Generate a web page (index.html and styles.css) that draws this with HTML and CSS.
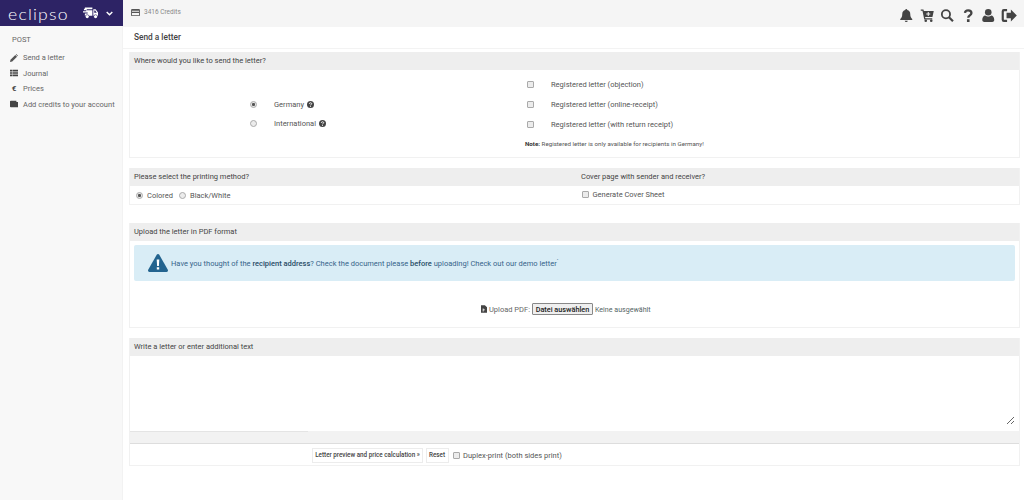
FILE: index.html
```html
<!DOCTYPE html>
<html lang="en">
<head>
<meta charset="utf-8">
<title>Send a letter</title>
<link rel="stylesheet" href="styles.css">
</head>
<body>
<aside class="sidebar">
  <div class="brand">
    <span class="logo-box"><span class="logo">eclipso</span></span>
    <svg class="truck" viewBox="0 0 16 12"><path fill="#fff" d="M2 0h8v2H4v1h6v6H6.500a2.200 2.200 0 0 0-4 0H2V6.500h3v-1H0V4h3.500V3H1V1.500h1zM11 2h2.500L16 5.500V9h-.6a2.200 2.200 0 0 0-4 0H11zM12 3.300v2.400h2.700l-1.700-2.400z"/><circle fill="#fff" cx="4.500" cy="9.800" r="1.700"/><circle fill="#fff" cx="13.400" cy="9.800" r="1.700"/></svg>
    <svg class="chev" viewBox="0 0 10 7"><path fill="none" stroke="#fff" stroke-width="2" d="M1 1.200l4 4 4-4"/></svg>
  </div>
  <nav class="nav">
    <div class="nav-title">POST</div>
    <a class="nav-item"><svg class="nav-ico" viewBox="0 0 10 10"><path fill="#555" d="M0 10l.6-2.800L6.600 1.200l2.200 2.200-6 6zM7.200.6l.6-.6 2.200 2.200-.6.600z"/></svg>Send a letter</a>
    <a class="nav-item"><svg class="nav-ico" viewBox="0 0 10 8"><path fill="#444" d="M0 0h2.500v2H0zM3 0h7v2H3zM0 3h2.500v2H0zM3 3h7v2H3zM0 6h2.500v2H0zM3 6h7v2H3z"/></svg>Journal</a>
    <a class="nav-item"><span class="nav-ico euro">€</span>Prices</a>
    <a class="nav-item"><svg class="nav-ico" viewBox="0 0 10 8"><path fill="#444" d="M1 0h7v1.500h2V8H1a1 1 0 0 1-1-1V1a1 1 0 0 1 1-1z"/></svg>Add credits to your account</a>
  </nav>
</aside>
<div class="main">
  <header class="topbar">
    <div class="credits">
      <svg class="card" viewBox="0 0 10 8"><path fill="#555" d="M1 0h8a1 1 0 0 1 1 1v6a1 1 0 0 1-1 1H1a1 1 0 0 1-1-1V1a1 1 0 0 1 1-1zM1 2v1h8V2zM1 4.500V7h8V4.500z"/></svg>
      <span>3416 Credits</span>
    </div>
    <div class="tools">
      <svg class="tool" viewBox="0 0 12 13"><path fill="#444" d="M6 0a1 1 0 0 1 1 1c2 .5 3 2 3 4 0 3 1 4 2 5v1H0v-1c1-1 2-2 2-5 0-2 1-3.500 3-4a1 1 0 0 1 1-1zM4.500 11.700h3a1.500 1.300 0 0 1-3 0z"/></svg>
      <svg class="tool" viewBox="0 0 13 13"><path fill="#444" d="M0 .5h2.700l.4 1.500H13l-1.300 6H4.300l.3 1.200H11.500v1.300H3.500L1.700 1.800H0zM7 3v1.500H5.500v1H7V7h1V5.500h1.500v-1H8V3z"/><circle fill="#444" cx="5" cy="11.700" r="1.300"/><circle fill="#444" cx="10.500" cy="11.700" r="1.300"/></svg>
      <svg class="tool" viewBox="0 0 13 13"><circle cx="5.200" cy="5.200" r="4.100" fill="none" stroke="#444" stroke-width="1.800"/><path stroke="#444" stroke-width="2.200" d="M8.200 8.200l4 4"/></svg>
      <svg class="tool" viewBox="0 0 9 13"><path fill="none" stroke="#444" stroke-width="2.300" d="M1.200 3.800C1.400 2.200 2.700 1.300 4.400 1.300c1.800 0 3.300 1 3.300 2.700 0 2.400-3.200 2.500-3.200 4.800"/><path fill="#444" d="M3.200 10.200h2.600V13H3.200z"/></svg>
      <svg class="tool" viewBox="0 0 12 13"><circle fill="#444" cx="6" cy="3.300" r="3.300"/><path fill="#444" d="M0 11c0-3 1.500-4.500 3-4.500 1 .8 2 1 3 1s2-.2 3-1c1.500 0 3 1.500 3 4.500 0 1.300-1 2-2 2H2c-1 0-2-.7-2-2z"/></svg>
      <svg class="tool" viewBox="0 0 14 12"><path fill="#444" d="M5 0v2H2.500a.5.5 0 0 0-.5.500v7a.5.5 0 0 0 .5.500H5v2H2a2 2 0 0 1-2-2V2a2 2 0 0 1 2-2zM8.500.500L14 6l-5.500 5.500V8.500H4.500v-5h4z"/></svg>
    </div>
  </header>
  <h1 class="title">Send a letter</h1>
  <div class="content">
    <section class="panel panel-dest">
      <h2 class="phead">Where would you like to send the letter?</h2>
      <div class="dest">
        <div class="countries">
          <label class="country"><input type="radio" name="dest" class="radio" checked><span>Germany</span><svg class="help" viewBox="0 0 10 10"><circle cx="5" cy="5" r="5" fill="#444"/><path fill="none" stroke="#fff" stroke-width="1.300" d="M3.300 4c.1-1 .8-1.500 1.700-1.500s1.700.5 1.700 1.300C6.700 5 5 5 5 6.300"/><path fill="#fff" d="M4.300 7h1.400v1.300H4.300z"/></svg></label>
          <label class="country"><input type="radio" name="dest" class="radio"><span>International</span><svg class="help" viewBox="0 0 10 10"><circle cx="5" cy="5" r="5" fill="#444"/><path fill="none" stroke="#fff" stroke-width="1.300" d="M3.300 4c.1-1 .8-1.500 1.700-1.500s1.700.5 1.700 1.300C6.700 5 5 5 5 6.300"/><path fill="#fff" d="M4.300 7h1.400v1.300H4.300z"/></svg></label>
        </div>
        <div class="options">
          <label class="option"><input type="checkbox" class="check"><span>Registered letter (objection)</span></label>
          <label class="option"><input type="checkbox" class="check"><span>Registered letter (online-receipt)</span></label>
          <label class="option"><input type="checkbox" class="check"><span>Registered letter (with return receipt)</span></label>
          <p class="note"><b>Note:</b> Registered letter is only available for recipients in Germany!</p>
        </div>
      </div>
    </section>
    <section class="panel panel-print">
      <div class="phead phead-split"><h2 class="ptitle">Please select the printing method?</h2><h2 class="ptitle">Cover page with sender and receiver?</h2></div>
      <div class="print">
        <div class="print-col">
          <label class="inline radio-label"><input type="radio" name="color" class="radio" checked><span>Colored</span></label>
          <label class="inline radio-label"><input type="radio" name="color" class="radio"><span>Black/White</span></label>
        </div>
        <div class="print-col cover">
          <label class="inline"><input type="checkbox" class="check"><span>Generate Cover Sheet</span></label>
        </div>
      </div>
    </section>
    <section class="panel panel-upload">
      <h2 class="phead">Upload the letter in PDF format</h2>
      <div class="alert">
        <svg class="warn" viewBox="0 0 20 18"><path fill="#23648f" d="M10 0c.6 0 1 .3 1.300.8l8.500 15c.5 1-.1 2.200-1.200 2.200H1.400C.3 18-.3 16.800.2 15.800L8.700.8C9 .3 9.400 0 10 0z"/><path fill="#fff" d="M8.700 5.500h2.600l-.4 6.500H9.100zM8.800 13.300h2.400v2.300H8.800z"/></svg>
        <p>Have you thought of the <b>recipient address</b>? Check the document please <b>before</b> uploading! Check out our demo letter<sup class="tick">`</sup></p>
      </div>
      <div class="upload">
        <svg class="pdf" viewBox="0 0 7 9"><path fill="#444" d="M0 0h4.500L7 2.500V9H0zM2 4v3.500h1V6h1.500V5H3V4z"/></svg>
        <span class="upload-label">Upload PDF:</span>
        <button type="button" class="file-btn">Datei auswählen</button>
        <span class="file-none">Keine ausgewählt</span>
      </div>
    </section>
    <section class="panel panel-text">
      <h2 class="phead">Write a letter or enter additional text</h2>
      <textarea class="letter" aria-label="Letter text"></textarea>
      <div class="strip"></div>
      <div class="actions">
        <button type="button" class="btn btn-preview">Letter preview and price calculation »</button>
        <button type="button" class="btn btn-reset">Reset</button>
        <label class="inline duplex"><input type="checkbox" class="check"><span>Duplex-print (both sides print)</span></label>
      </div>
    </section>
  </div>
</div>
</body>
</html>
```
FILE: styles.css
```css
* { box-sizing: border-box; }
html, body { height: 100%; }
body {
  margin: 0;
  display: flex;
  width: 1024px;
  height: 500px;
  overflow: hidden;
  background: #fff;
  font-family: Roboto, "Liberation Sans", sans-serif;
  font-size: 7.500px;
  color: #555;
}
.sidebar {
  width: 123px;
  flex: none;
  background: #f8f8f8;
  border-right: 1px solid #f2f2f2;
}
.brand {
  width: 123px;
  height: 26px;
  background: #2d2365;
  display: flex;
  align-items: center;
  padding-left: 8px;
}
.logo-box { width: 75px; flex: none; }
.logo {
  display: inline-block;
  font-family: Lato, sans-serif;
  font-weight: 300;
  font-size: 16px;
  letter-spacing: 1.100px;
  color: #fff;
  transform: scaleX(1.100);
  transform-origin: left;
}
.truck { width: 15px; height: 12px; margin-right: 8px; flex: none; }
.chev { width: 7px; height: 5px; flex: none; }
.nav { padding-top: 8px; color: #666; }
.nav-title { height: 11px; line-height: 11px; padding-left: 12px; margin-bottom: 5px; }
.nav-item { height: 15.500px; display: flex; align-items: center; padding-left: 10px; white-space: nowrap; }
.nav-ico { width: 8px; height: 8px; margin-right: 5px; flex: none; }
.euro { font-size: 8px; font-weight: 700; color: #444; text-align: center; line-height: 8px; }
.main { flex: 1; display: flex; flex-direction: column; min-width: 0; }
.topbar {
  height: 27px;
  flex: none;
  background: #f5f5f5;
  display: flex;
  align-items: center;
  justify-content: space-between;
  padding: 4px 5px 0 8px;
}
.credits { display: flex; align-items: center; gap: 4px; font-size: 6.500px; color: #888; margin-top: -7px; }
.card { width: 9px; height: 7px; }
.tools { display: flex; align-items: center; }
.tool { height: 13px; width: 20.500px; }
.title {
  margin: 0 0 3px 0;
  height: 22px;
  flex: none;
  padding: 0 0 0 11px;
  font-size: 8.300px;
  font-weight: 500;
  line-height: 21px;
  color: #444;
  border-bottom: 1px solid #f3f3f3;
}
.content { padding: 0 4px 0 6px; display: flex; flex-direction: column; }
.panel { border: 1px solid #f1f1f1; border-top: 0; background: #fff; }
.phead {
  margin: 0;
  height: 18px;
  background: #eeeeee;
  font-size: 7.500px;
  font-weight: 400;
  line-height: 18px;
  padding-left: 4px;
  color: #444;
}
.phead-split { display: grid; grid-template-columns: 447px 1fr; }
.ptitle { margin: 0; font: inherit; }
.panel-dest { height: 106px; margin-bottom: 10px; }
.dest { display: flex; height: 88px; }
.countries { width: 395px; flex: none; padding: 25px 0 0 120px; display: flex; flex-direction: column; }
.country { display: flex; align-items: center; height: 19px; }
.country span { margin-left: 17px; margin-right: 3px; }
.radio, .check {
  appearance: none;
  margin: 0;
  width: 7px;
  height: 7px;
  flex: none;
  background: #ececec;
  border: 1px solid #aaa;
}
.radio { border-radius: 50%; }
.radio:checked { background: radial-gradient(circle, #555 0 1.200px, #e6e6e6 2px); }
.check { border-radius: 1px; }
.help { width: 7px; height: 7px; }
.options { padding-top: 5px; }
.option { display: flex; align-items: center; height: 19.700px; }
.option span { margin-left: 17px; }
.option .check { margin-left: 2px; }
.note { margin: 6px 0 0 0; font-size: 6.200px; line-height: 9px; }
.note b { color: #333; font-weight: 700; }
.panel-print { height: 37px; margin-bottom: 18px; }
.print { display: grid; grid-template-columns: 447px 1fr; height: 18px; }
.print-col { padding-left: 6px; display: flex; align-items: center; gap: 6px; }
.print-col.cover { padding: 0 0 2px 5px; }
.inline { display: inline-flex; align-items: center; gap: 3.500px; }
.radio-label { gap: 4px; }
.panel-upload { height: 105px; margin-bottom: 10px; }
.alert {
  margin: 4px 4px 0 4px;
  height: 36px;
  background: #d9edf6;
  border-radius: 2px;
  display: flex;
  align-items: center;
  padding-left: 14px;
  color: #36648a;
}
.alert p { margin: 0 0 0 3px; }
.alert b { color: #284c66; font-weight: 500; }
.tick { font-size: 6px; line-height: 0; }
.warn { width: 20px; height: 18px; flex: none; }
.upload { display: flex; align-items: center; padding: 22px 0 0 351px; color: #666; }
.pdf { width: 6px; height: 8px; margin-right: 2px; flex: none; }
.upload-label { width: 40px; flex: none; white-space: nowrap; }
.file-btn {
  height: 12px;
  width: 61px;
  margin: 0 2px 0 3px;
  padding: 0;
  flex: none;
  white-space: nowrap;
  background: #efefef;
  border: 1px solid #888;
  border-radius: 1px;
  font: 500 7.300px Roboto, sans-serif;
  color: #222;
}
.file-none { color: #566; font-size: 7.100px; white-space: nowrap; }
.panel-text { height: 128px; }
.letter {
  display: block;
  width: calc(100% - 8px);
  height: 69px;
  border: 0;
  outline: 0;
  margin: 0 4px 6px;
  padding: 0;
  background: #fff;
}
.strip {
  height: 13px;
  background: #f2f2f2;
  border-bottom: 1px solid #ddd;
}
.strip::before {
  content: "";
  display: block;
  width: 178px;
  height: 1px;
  background: #e4e4e4;
}
.actions { height: 22px; display: flex; align-items: center; padding-left: 182px; gap: 2.500px; }
.btn {
  height: 15px;
  padding: 0;
  flex: none;
  white-space: nowrap;
  background: #fff;
  border: 1px solid #ececec;
  font: 500 6.300px Roboto, sans-serif;
  color: #444;
}
.btn-preview { width: 111px; }
.btn-reset { width: 23px; }
.duplex { margin-left: 1.500px; }
.duplex span { font-size: 7.500px; }
```
